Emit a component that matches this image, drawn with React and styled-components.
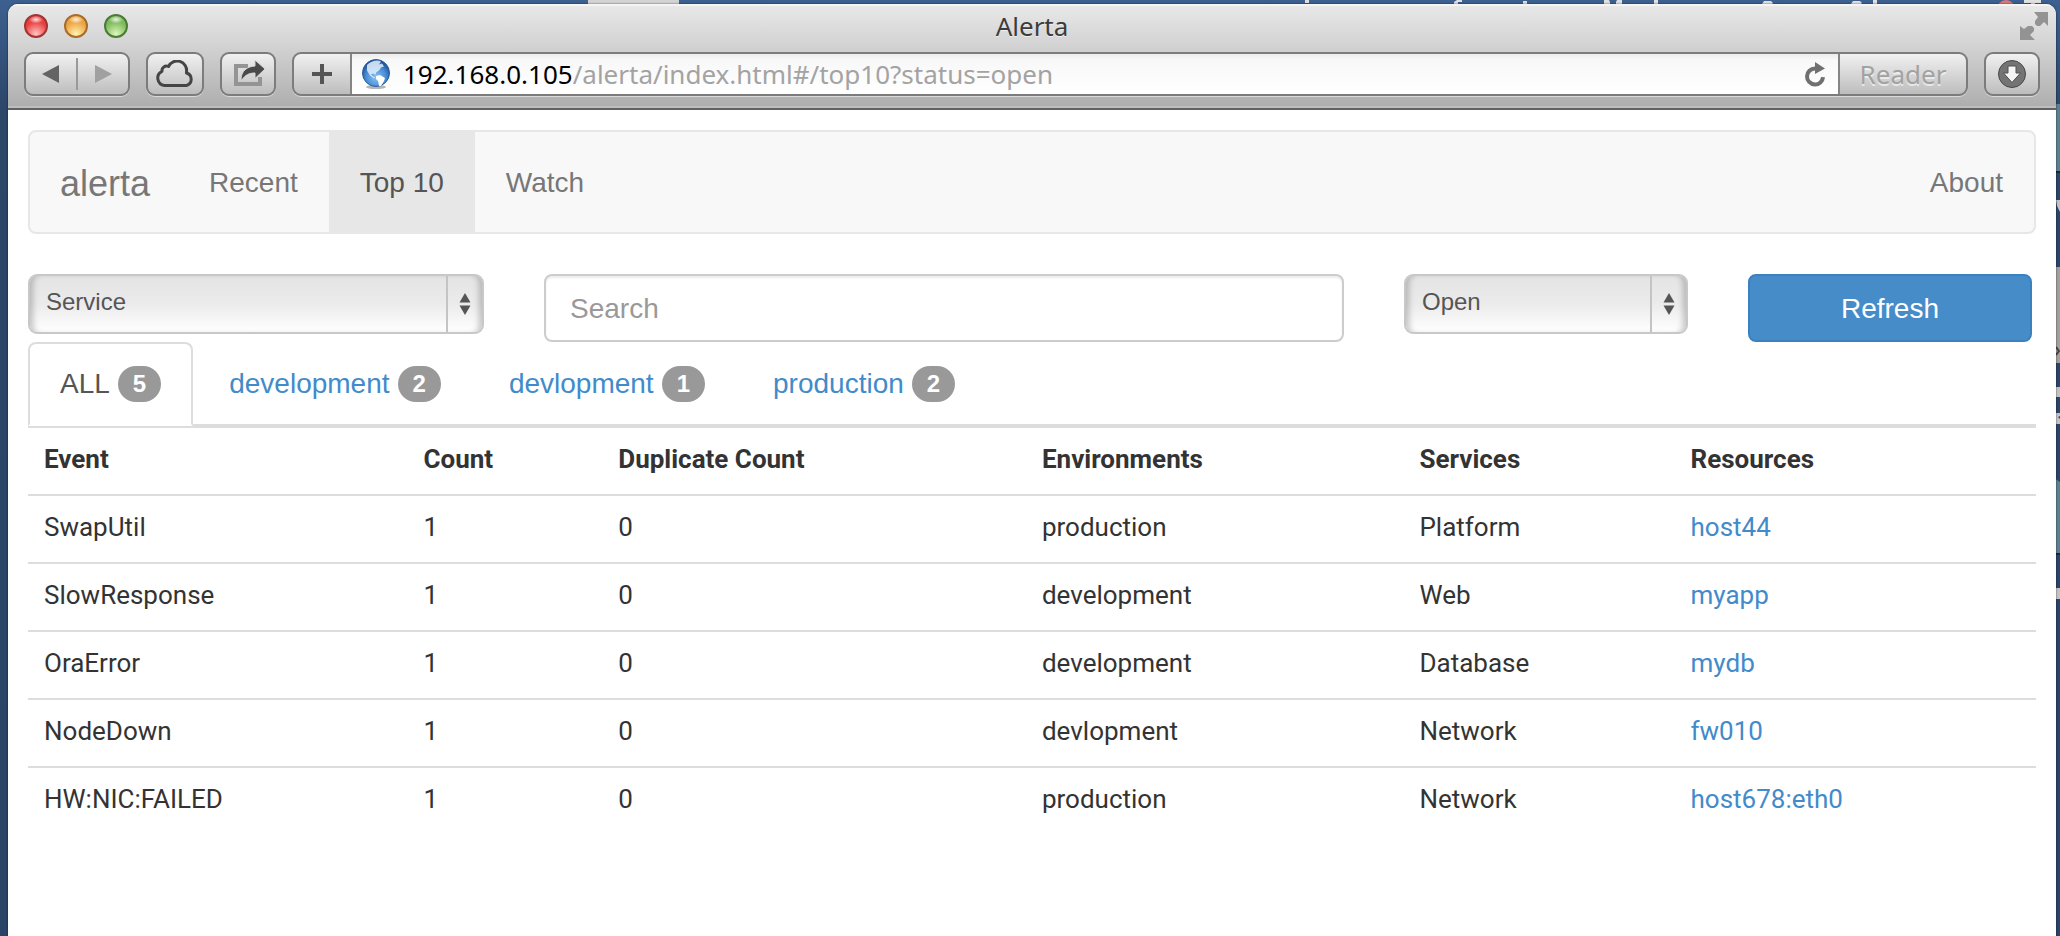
import React from 'react';
import styled, { createGlobalStyle, css } from 'styled-components';

const GlobalStyle = createGlobalStyle`
  *, *::before, *::after { box-sizing: border-box; }
  body {
    margin: 0;
    background: #2b4568;
    font-family: Roboto, "Liberation Sans", sans-serif;
    color: #333;
  }
  button, input, select { font: inherit; color: inherit; margin: 0; }
`;

const chromeFont = css`font-family: "Noto Sans", "Open Sans", sans-serif;`;
const uiFont = css`font-family: "Liberation Sans", Arial, sans-serif;`;

/* ---------- desktop and window ---------- */

const Desktop = styled.div`
  position: relative;
  display: flex;
  min-height: 100vh;
  padding: 4px 4px 0 8px;
  overflow: hidden;
  background: linear-gradient(#3c6090, #2b4668 110px, #2a4467);
`;

const TopIcons = styled.svg`
  position: absolute;
  top: 0;
  right: 0;
`;

const SideIcons = styled.svg`
  position: absolute;
  top: 0;
  right: 0;
`;

const BrowserWindow = styled.div`
  position: relative;
  flex: 1;
  min-width: 0;
  display: flex;
  flex-direction: column;
  border-radius: 10px 10px 0 0;
  overflow: hidden;
  background: #fff;
  box-shadow: 0 0 2px rgba(0, 0, 0, 0.7);
`;

const Chrome = styled.header`
  ${chromeFont}
  font-size: 26px;
  border-bottom: 2px solid #626262;
  background: linear-gradient(#e9e9e9, #cecece 50px, #adadad);
  box-shadow: inset 0 2px 0 rgba(255, 255, 255, 0.5), inset 0 -2px 0 rgba(255, 255, 255, 0.2);
`;

const TitleBar = styled.div`
  display: grid;
  grid-template-columns: 1fr auto 1fr;
  align-items: center;
  height: 48px;
  padding: 0 8px 4px;
`;

const Title = styled.div`
  line-height: 40px;
  color: #3c3c3c;
  text-shadow: 0 1px 0 rgba(255, 255, 255, 0.6);
`;

const Lights = styled.div`
  display: flex;
  gap: 16px;
  padding-left: 8px;
`;

const Light = styled.button`
  width: 24px;
  height: 24px;
  padding: 0;
  border: 2px solid ${(p) => p.$rim};
  border-radius: 50%;
  background:
    radial-gradient(ellipse 7px 4px at 50% 18%, rgba(255, 255, 255, 0.85), rgba(255, 255, 255, 0)),
    radial-gradient(circle at 50% 90%, ${(p) => p.$glow}, ${(p) => p.$fill} 60%);
`;

const FullScreen = styled.button`
  justify-self: end;
  display: flex;
  padding: 0;
  border: 0;
  background: none;
`;

const Controls = styled.div`
  display: flex;
  gap: 16px;
  padding: 0 16px 12px;
`;

const chromeSurface = css`
  border: 2px solid #7c7c7c;
  border-radius: 9px;
  background: linear-gradient(#f1f1f1, #bdbdbd);
  box-shadow: 0 1px 0 rgba(255, 255, 255, 0.5);
`;

const ChromeButton = styled.button`
  ${chromeSurface}
  display: flex;
  align-items: center;
  justify-content: center;
  flex: none;
  width: ${(p) => p.$width}px;
  height: 44px;
  padding: 0;
`;

const HistoryButtons = styled.div`
  ${chromeSurface}
  display: flex;
  align-items: center;
  flex: none;
  width: 106px;
  height: 44px;
`;

const HistoryButton = styled.button`
  flex: 1;
  display: flex;
  align-items: center;
  justify-content: center;
  height: 32px;
  padding: 0;
  border: 0;
  background: none;

  & + & { border-left: 2px solid #999; }
`;

const AddressBar = styled.form`
  ${chromeSurface}
  flex: 1;
  min-width: 0;
  display: flex;
  height: 44px;
  overflow: hidden;
`;

const AddressButton = styled.button`
  display: flex;
  align-items: center;
  justify-content: center;
  flex: none;
  width: ${(p) => p.$width}px;
  padding: 0;
  border: 0 solid #858585;
  border-width: ${(p) => (p.$side === 'left' ? '0 2px 0 0' : '0 0 0 2px')};
  background: none;
  color: #a2a2a2;
  text-shadow: 0 2px 0 rgba(255, 255, 255, 0.6);
`;

const AddressField = styled.div`
  flex: 1;
  min-width: 0;
  display: flex;
  align-items: center;
  padding: 0 12px 0 9px;
  background: linear-gradient(#ececec, #f8f8f8 6px, #fff);
`;

const Host = styled.label`
  margin-left: 12px;
  line-height: 36px;
  color: #000;
`;

const Path = styled.input`
  flex: 1;
  min-width: 0;
  height: 36px;
  padding: 0;
  border: 0;
  outline: 0;
  background: none;
  color: #a3a3a3;
`;

const ReloadButton = styled.button`
  display: flex;
  flex: none;
  padding: 0;
  border: 0;
  background: none;
`;

/* ---------- page ---------- */

const Page = styled.main`
  padding: 20px;
`;

const Navbar = styled.nav`
  ${uiFont}
  display: flex;
  height: 104px;
  border: 2px solid #e7e7e7;
  border-radius: 8px;
  background: #f8f8f8;
  font-size: 28px;
`;

const NavLink = styled.a`
  display: flex;
  align-items: center;
  padding: 2px 31px 0;
  text-decoration: none;
  color: ${(p) => (p.$active ? '#555' : '#777')};
  background: ${(p) => (p.$active ? '#e7e7e7' : 'transparent')};
`;

const Brand = styled(NavLink)`
  padding: 4px 28px 0 30px;
  font-size: 36px;
`;

const NavEnd = styled.div`
  display: flex;
  margin-left: auto;
`;

const Filters = styled.form`
  ${uiFont}
  display: grid;
  grid-template-columns: repeat(12, 1fr);
  column-gap: 60px;
  align-items: start;
  margin-top: 40px;
  padding-right: 4px;
  font-size: 28px;
`;

const SelectBox = styled.div`
  grid-column: span ${(p) => p.$span};
  display: grid;
  grid-template-columns: 1fr 38px;
  align-items: center;
`;

const Select = styled.select`
  grid-area: 1 / 1 / 2 / 3;
  appearance: none;
  width: 100%;
  height: 60px;
  padding: 0 40px 6px 16px;
  border: 2px solid #c8c8c8;
  border-radius: 9px;
  background: linear-gradient(#e4e4e4, #ebebeb 50%, #fff);
  box-shadow: inset 7px 0 6px -4px rgba(0, 0, 0, 0.22), inset -7px 0 6px -4px rgba(0, 0, 0, 0.22);
  font-size: 24px;
  color: #555;
`;

const SelectArrows = styled.span`
  grid-area: 1 / 2;
  display: flex;
  align-items: center;
  justify-content: center;
  height: 56px;
  padding-right: 2px;
  border-left: 2px solid #c4c4c4;
  pointer-events: none;
`;

const Search = styled.input`
  ${uiFont}
  grid-column: span 5;
  min-width: 0;
  height: 68px;
  padding: 2px 24px 0;
  border: 2px solid #ccc;
  border-radius: 8px;
  background: #fff;
  box-shadow: inset 0 2px 2px rgba(0, 0, 0, 0.075);

  &::placeholder { color: #999; opacity: 1; }
`;

const Refresh = styled.button`
  grid-column: span 2;
  height: 68px;
  padding: 2px 0 0;
  border: 2px solid #3b80bf;
  border-radius: 8px;
  background: #468cc9;
  && { color: #fff; }
`;

const Tabs = styled.ul`
  ${uiFont}
  display: flex;
  gap: 4px;
  margin: 0;
  padding: 0;
  list-style: none;
  border-bottom: 2px solid #ddd;
  font-size: 28px;
`;

const Tab = styled.li`
  margin-bottom: -2px;
`;

const TabLink = styled.a`
  display: flex;
  align-items: center;
  gap: 8px;
  padding: 20px 30px;
  border: 2px solid transparent;
  border-radius: 8px 8px 0 0;
  line-height: 40px;
  text-decoration: none;
  color: #428bca;
  ${(p) => p.$active && css`
    border-color: #ddd #ddd #fff;
    background: #fff;
    color: #555;
  `}
`;

const Badge = styled.span`
  padding: 6px 15px;
  border-radius: 18px;
  background: #999;
  font-size: 24px;
  font-weight: 700;
  line-height: 24px;
  color: #fff;
`;

const Table = styled.table`
  width: 100%;
  table-layout: fixed;
  border-collapse: separate;
  border-spacing: 0;
  font-size: 26px;
  line-height: 38px;
`;

const Column = styled.col`
  width: ${(p) => p.$share}%;
`;

const cell = css`
  padding: 12px 16px 16px;
  border-top: 2px solid #ddd;
  text-align: left;
  overflow-wrap: anywhere;
`;

const HeadCell = styled.th`${cell}`;
const Cell = styled.td`${cell}`;

const ResourceLink = styled.a`
  color: #428bca;
  text-decoration: none;
`;

/* ---------- icons ---------- */

const CloudIcon = () => (
  <svg width="40" height="28" viewBox="0 0 40 28" fill="none" aria-hidden="true">
    <path d="M9.500 25.500a7.500 7.500 0 0 1-2.500-14.200 4.600 4.600 0 0 1 6.500-4.800 9.500 9.500 0 0 1 18 5.500v1a6.500 6.500 0 0 1 0 12.500z" stroke="#454545" strokeWidth="3" strokeLinejoin="round" />
  </svg>
);

const ShareIcon = () => (
  <svg width="34" height="28" viewBox="0 0 34 28" aria-hidden="true">
    <path d="M17 6H5v18h24v-7" fill="none" stroke="#949494" strokeWidth="4" />
    <path d="M10 20C10 11 16 6.500 24 6V0l10 9-10 9.500V13c-6 0-10 2-13 7z" fill="#4a4a4a" stroke="#d6d6d6" strokeWidth="1" />
  </svg>
);

const GlobeIcon = () => (
  <svg width="30" height="30" viewBox="0 0 30 30" aria-hidden="true">
    <defs>
      <radialGradient id="sea" cx="50%" cy="65%" r="60%">
        <stop offset="0" stopColor="#8cc4f2" />
        <stop offset="0.600" stopColor="#4a8fd6" />
        <stop offset="1" stopColor="#1d4f95" />
      </radialGradient>
    </defs>
    <ellipse cx="15" cy="28" rx="10" ry="2" fill="#b5b5b5" />
    <circle cx="15" cy="14" r="13.500" fill="url(#sea)" stroke="#2a5c9e" />
    <path d="M6 6c4-4 10-5.500 14-3.500l-2 3 3-1 2 3-3 1-2 3-3 2 0 2-3-1-2 1 2 2 2 1-1 1-4-3-3-5z" fill="#e2effb" opacity="0.850" />
    <path d="M15 17l4-1 5 3-1 3-3 5-2 0-1-5-2-2z" fill="#fff" />
  </svg>
);

const ReloadIcon = () => (
  <svg width="22" height="26" viewBox="0 0 22 26" aria-hidden="true">
    <path d="M12 7.500H11a8 8 0 1 0 8 8.500" fill="none" stroke="#707070" strokeWidth="4" />
    <path d="M11 1l10 6.500L11 13z" fill="#707070" />
  </svg>
);

const PlusIcon = () => (
  <svg width="20" height="20" viewBox="0 0 20 20" aria-hidden="true">
    <path d="M10 0v20M0 10h20" stroke="#555" strokeWidth="4" />
  </svg>
);

const DownloadIcon = () => (
  <svg width="30" height="30" viewBox="0 0 30 30" aria-hidden="true">
    <circle cx="15" cy="15" r="13.500" fill="#747474" stroke="#474747" />
    <path d="M11 7h8v7h4.500L15 23.500 6.500 14H11z" fill="#f5f5f5" stroke="#505050" />
  </svg>
);

const FullScreenIcon = () => (
  <svg width="28" height="28" viewBox="0 0 28 28" fill="#939393" aria-hidden="true">
    <path d="M14 0h14v14l-4-4-4 4h-3l-2-2v-3l3-4z" />
    <path d="M0 28V14l4 3 4-3h4l2 2v3l-4 4 5 5z" />
  </svg>
);

const Triangle = ({ left }) => (
  <svg width="18" height="18" viewBox="0 0 18 18" aria-hidden="true">
    <path d={left ? 'M17 0v18L0 9z' : 'M1 0v18l17-9z'} fill={left ? '#636363' : '#a0a0a0'} />
  </svg>
);

const ArrowPair = () => (
  <svg width="12" height="24" viewBox="0 0 12 24" fill="#555" aria-hidden="true">
    <path d="M6 1l5.500 9.500H0.500z" />
    <path d="M6 23l5.500-9.500H0.500z" />
  </svg>
);

/* Items lying on the desktop that show past the edges of the window. */
const DesktopItems = () => (
  <>
    <TopIcons width="1480" height="5" viewBox="0 0 1480 5" aria-hidden="true">
      <path d="M8 0h91v5H8z" fill="#d3d3d3" />
      <g fill="#e0e0e0">
        <path d="M725 0h4v3h-4zM874 4V2l3-2h5v2h-4v2zM943 1h4v3h-4zM1024 0h5l1 2v2h-6zM1026 0zM1036 2l1-2h5v4h-6zM1074 0h4v4h-4z" />
        <path d="M1182 4l2-3h7l2 2-1 1zM1271 4l2-3h7l2 2-1 1zM1293 0h4v4h-4zM1444 0h17v3h-6v2h-4V3h-7z" />
      </g>
      <circle cx="1426" cy="9" r="9" fill="#e07878" />
    </TopIcons>
    <SideIcons width="6" height="760" viewBox="0 0 6 760" aria-hidden="true">
      <path d="M0 104h6v67H0zM0 478l6 4v71H0z" fill="#5d8090" />
      <path d="M0 267h6v96H0z" fill="#a3a09f" />
      <path d="M0 171h6v2H0zM0 553h6v2H0z" fill="#16263b" />
      <g fill="#c4c4c4">
        <path d="M2 200h4v12l-3-6zM2 387h4v10H2zM2 413h4v3l-2 1 2 2v5H2zM2 588h4v11H2z" />
      </g>
      <path d="M2 347l3 4-3 4" fill="none" stroke="#444" strokeWidth="2" />
    </SideIcons>
  </>
);

/* ---------- data ---------- */

const environments = [
  { name: 'ALL', count: 5 },
  { name: 'development', count: 2 },
  { name: 'devlopment', count: 1 },
  { name: 'production', count: 2 },
];

const columns = [
  { label: 'Event', share: 18.9 },
  { label: 'Count', share: 9.7 },
  { label: 'Duplicate Count', share: 21.1 },
  { label: 'Environments', share: 18.8 },
  { label: 'Services', share: 13.5 },
  { label: 'Resources', share: 18 },
];

const alerts = [
  { event: 'SwapUtil', environment: 'production', service: 'Platform', resource: 'host44' },
  { event: 'SlowResponse', environment: 'development', service: 'Web', resource: 'myapp' },
  { event: 'OraError', environment: 'development', service: 'Database', resource: 'mydb' },
  { event: 'NodeDown', environment: 'devlopment', service: 'Network', resource: 'fw010' },
  { event: 'HW:NIC:FAILED', environment: 'production', service: 'Network', resource: 'host678:eth0' },
];

const Dropdown = ({ label, span, options }) => (
  <SelectBox $span={span}>
    <Select aria-label={label} defaultValue={options[0]}>
      {options.map((o) => <option key={o}>{o}</option>)}
    </Select>
    <SelectArrows><ArrowPair /></SelectArrows>
  </SelectBox>
);

const BrowserChrome = () => (
  <Chrome>
    <TitleBar>
      <Lights>
        <Light aria-label="Close" $rim="#a33434" $fill="#e9413f" $glow="#ffc4c4" />
        <Light aria-label="Minimize" $rim="#a86c2b" $fill="#eda543" $glow="#fff3b0" />
        <Light aria-label="Zoom" $rim="#4a7c38" $fill="#7fbb5c" $glow="#dcf7bd" />
      </Lights>
      <Title>Alerta</Title>
      <FullScreen aria-label="Full screen"><FullScreenIcon /></FullScreen>
    </TitleBar>
    <Controls>
      <HistoryButtons>
        <HistoryButton aria-label="Back"><Triangle left /></HistoryButton>
        <HistoryButton aria-label="Forward"><Triangle /></HistoryButton>
      </HistoryButtons>
      <ChromeButton $width={58} aria-label="iCloud tabs"><CloudIcon /></ChromeButton>
      <ChromeButton $width={56} aria-label="Share"><ShareIcon /></ChromeButton>
      <AddressBar onSubmit={(e) => e.preventDefault()}>
        <AddressButton type="button" $width={58} $side="left" aria-label="Add bookmark"><PlusIcon /></AddressButton>
        <AddressField>
          <GlobeIcon />
          <Host htmlFor="address">192.168.0.105</Host>
          <Path id="address" defaultValue="/alerta/index.html#/top10?status=open" />
          <ReloadButton type="button" aria-label="Reload"><ReloadIcon /></ReloadButton>
        </AddressField>
        <AddressButton type="button" $width={128} $side="right">Reader</AddressButton>
      </AddressBar>
      <ChromeButton $width={56} aria-label="Downloads"><DownloadIcon /></ChromeButton>
    </Controls>
  </Chrome>
);

export default function App() {
  return (
    <>
      <GlobalStyle />
      <Desktop>
        <DesktopItems />
        <BrowserWindow>
          <BrowserChrome />
          <Page>
            <Navbar>
              <Brand href="#/">alerta</Brand>
              <NavLink href="#/recent">Recent</NavLink>
              <NavLink href="#/top10" $active aria-current="page">Top 10</NavLink>
              <NavLink href="#/watch">Watch</NavLink>
              <NavEnd><NavLink href="#/about">About</NavLink></NavEnd>
            </Navbar>
            <Filters onSubmit={(e) => e.preventDefault()}>
              <Dropdown label="Service" span={3} options={['Service', 'Platform', 'Web', 'Database', 'Network']} />
              <Search type="text" placeholder="Search" aria-label="Search" />
              <Dropdown label="Status" span={2} options={['Open', 'Closed']} />
              <Refresh type="submit">Refresh</Refresh>
            </Filters>
            <Tabs>
              {environments.map((env, i) => (
                <Tab key={env.name}>
                  <TabLink href={`#/top10?environment=${env.name}`} $active={i === 0}>
                    {env.name}
                    <Badge>{env.count}</Badge>
                  </TabLink>
                </Tab>
              ))}
            </Tabs>
            <Table>
              <colgroup>
                {columns.map((c) => <Column key={c.label} $share={c.share} />)}
              </colgroup>
              <thead>
                <tr>{columns.map((c) => <HeadCell key={c.label} scope="col">{c.label}</HeadCell>)}</tr>
              </thead>
              <tbody>
                {alerts.map((a) => (
                  <tr key={a.event}>
                    <Cell>{a.event}</Cell>
                    <Cell>1</Cell>
                    <Cell>0</Cell>
                    <Cell>{a.environment}</Cell>
                    <Cell>{a.service}</Cell>
                    <Cell><ResourceLink href={`#/alert/${a.resource}`}>{a.resource}</ResourceLink></Cell>
                  </tr>
                ))}
              </tbody>
            </Table>
          </Page>
        </BrowserWindow>
      </Desktop>
    </>
  );
}
